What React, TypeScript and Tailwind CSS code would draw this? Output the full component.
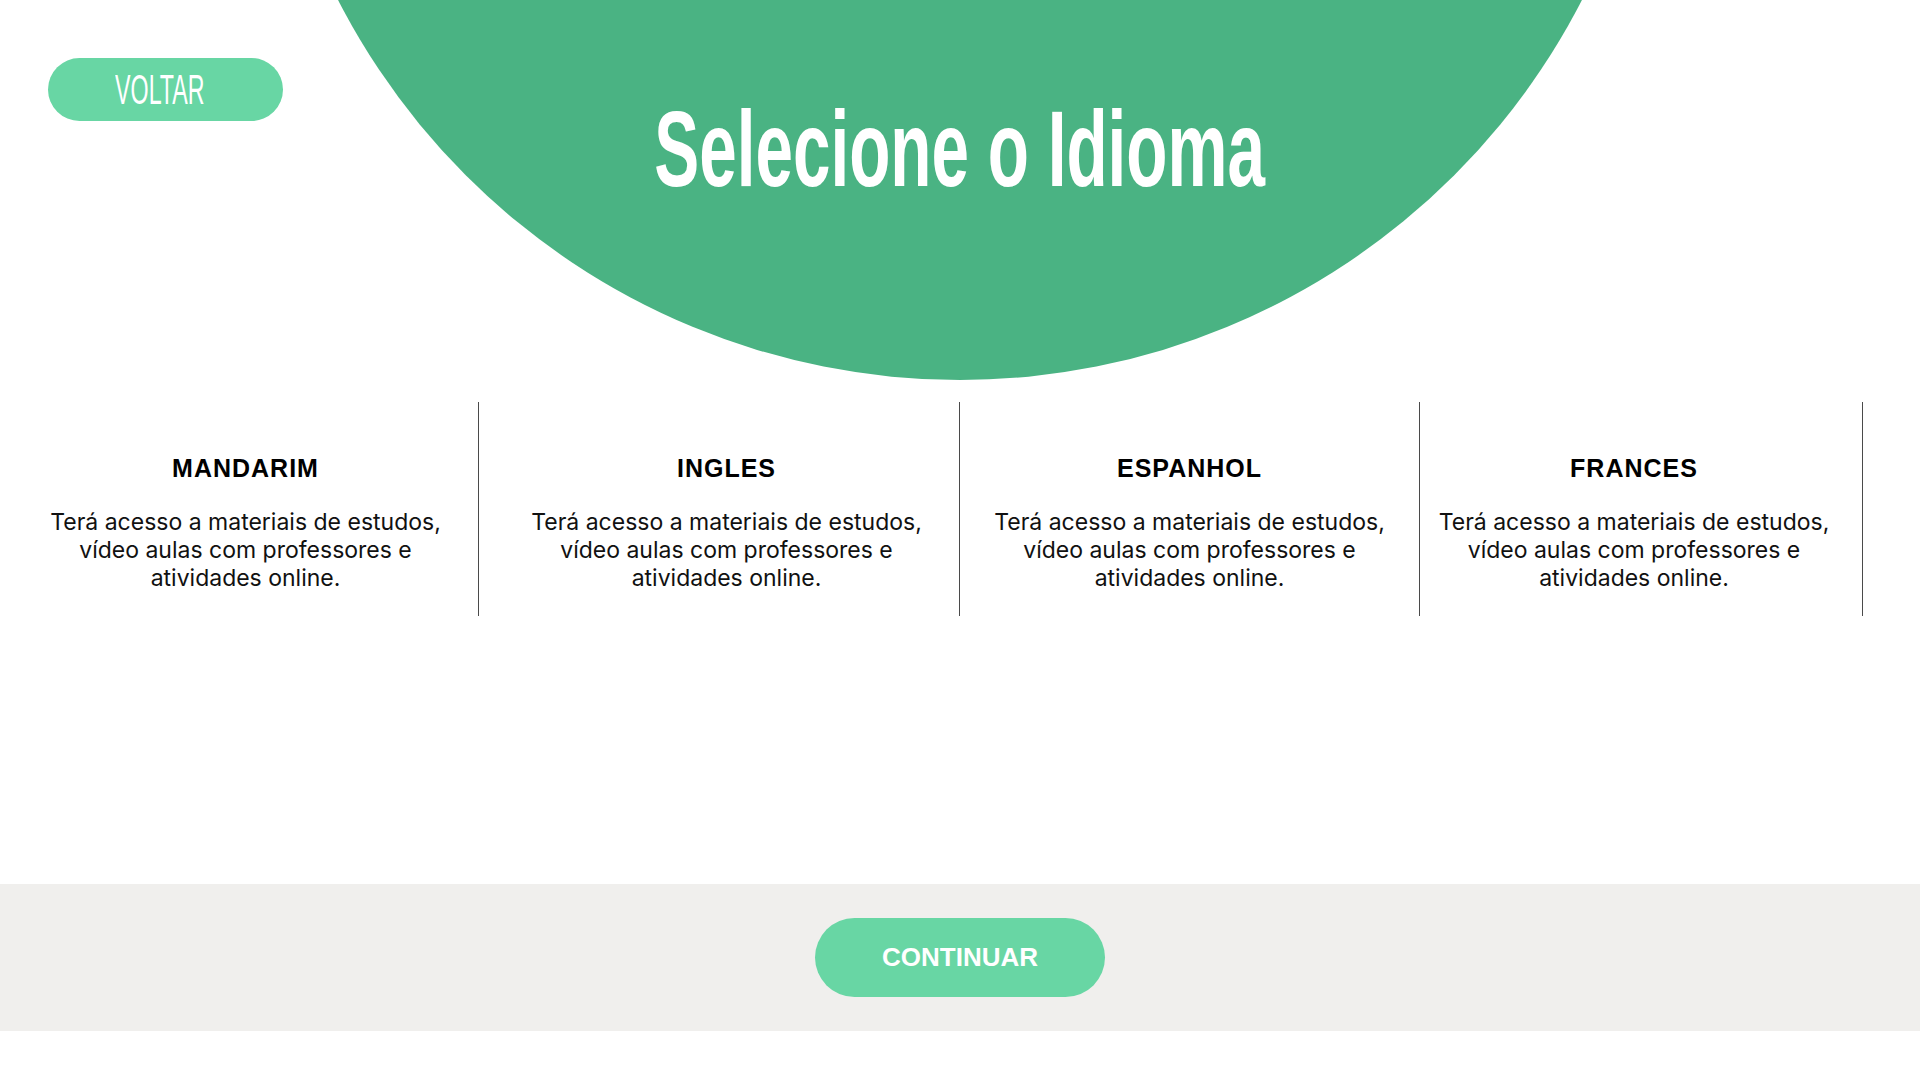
const idiomas = ["MANDARIM", "INGLES", "ESPANHOL", "FRANCES"];

const colunas = [
  "w-[479px] pl-[13px]",
  "w-[481px] pl-[15px]",
  "w-[460px]",
  "w-[443px] pr-[14px]",
];

function CartaoIdioma({ nome, className }: { nome: string; className: string }) {
  return (
    <div className={`flex h-[214px] flex-col items-center border-r border-[#4a4a4a] pt-[51px] text-center ${className}`}>
      <h3 className="font-['Liberation_Sans',Arial,sans-serif] text-[25px] leading-[30px] font-bold tracking-[1px] text-black">
        {nome}
      </h3>
      <p className="mt-[25px] font-['Inter',sans-serif] text-[23px] leading-[28px] text-[#111]">
        Terá acesso a materiais de estudos,
        <br />
        vídeo aulas com professores e
        <br />
        atividades online.
      </p>
    </div>
  );
}

export default function App() {
  return (
    <main className="relative h-[1080px] w-full overflow-hidden bg-white">
      {/* circulo decorativo do topo */}
      <div className="absolute left-[261px] top-[-1018px] h-[1398px] w-[1398px] rounded-full bg-[#4ab383]" />

      <header className="relative grid h-[402px] grid-cols-[1fr_auto_1fr] items-start">
        <div className="pl-[48px] pt-[58px]">
          <button className="flex h-[63px] w-[235px] items-center justify-center rounded-full bg-[#68d6a4] pr-[12px]">
            <span className="inline-block scale-x-[0.54] font-['Liberation_Sans',Arial,sans-serif] text-[43px] leading-none text-white">
              VOLTAR
            </span>
          </button>
        </div>

        <div className="flex justify-center pt-[96px]">
          <h1 className="inline-block scale-x-[0.63] font-['Liberation_Sans',Arial,sans-serif] text-[107px] leading-none font-bold text-white">
            Selecione o Idioma
          </h1>
        </div>

        <div />
      </header>

      <section className="relative flex">
        {idiomas.map((nome, i) => (
          <CartaoIdioma key={nome} nome={nome} className={colunas[i]} />
        ))}
      </section>

      <footer className="relative mt-[268px] flex h-[147px] items-center justify-center bg-[#f0efed]">
        <button className="flex h-[79px] w-[290px] items-center justify-center rounded-full bg-[#68d6a4] font-['Liberation_Sans',Arial,sans-serif] text-[26px] font-bold text-white">
          CONTINUAR
        </button>
      </footer>
    </main>
  );
}
